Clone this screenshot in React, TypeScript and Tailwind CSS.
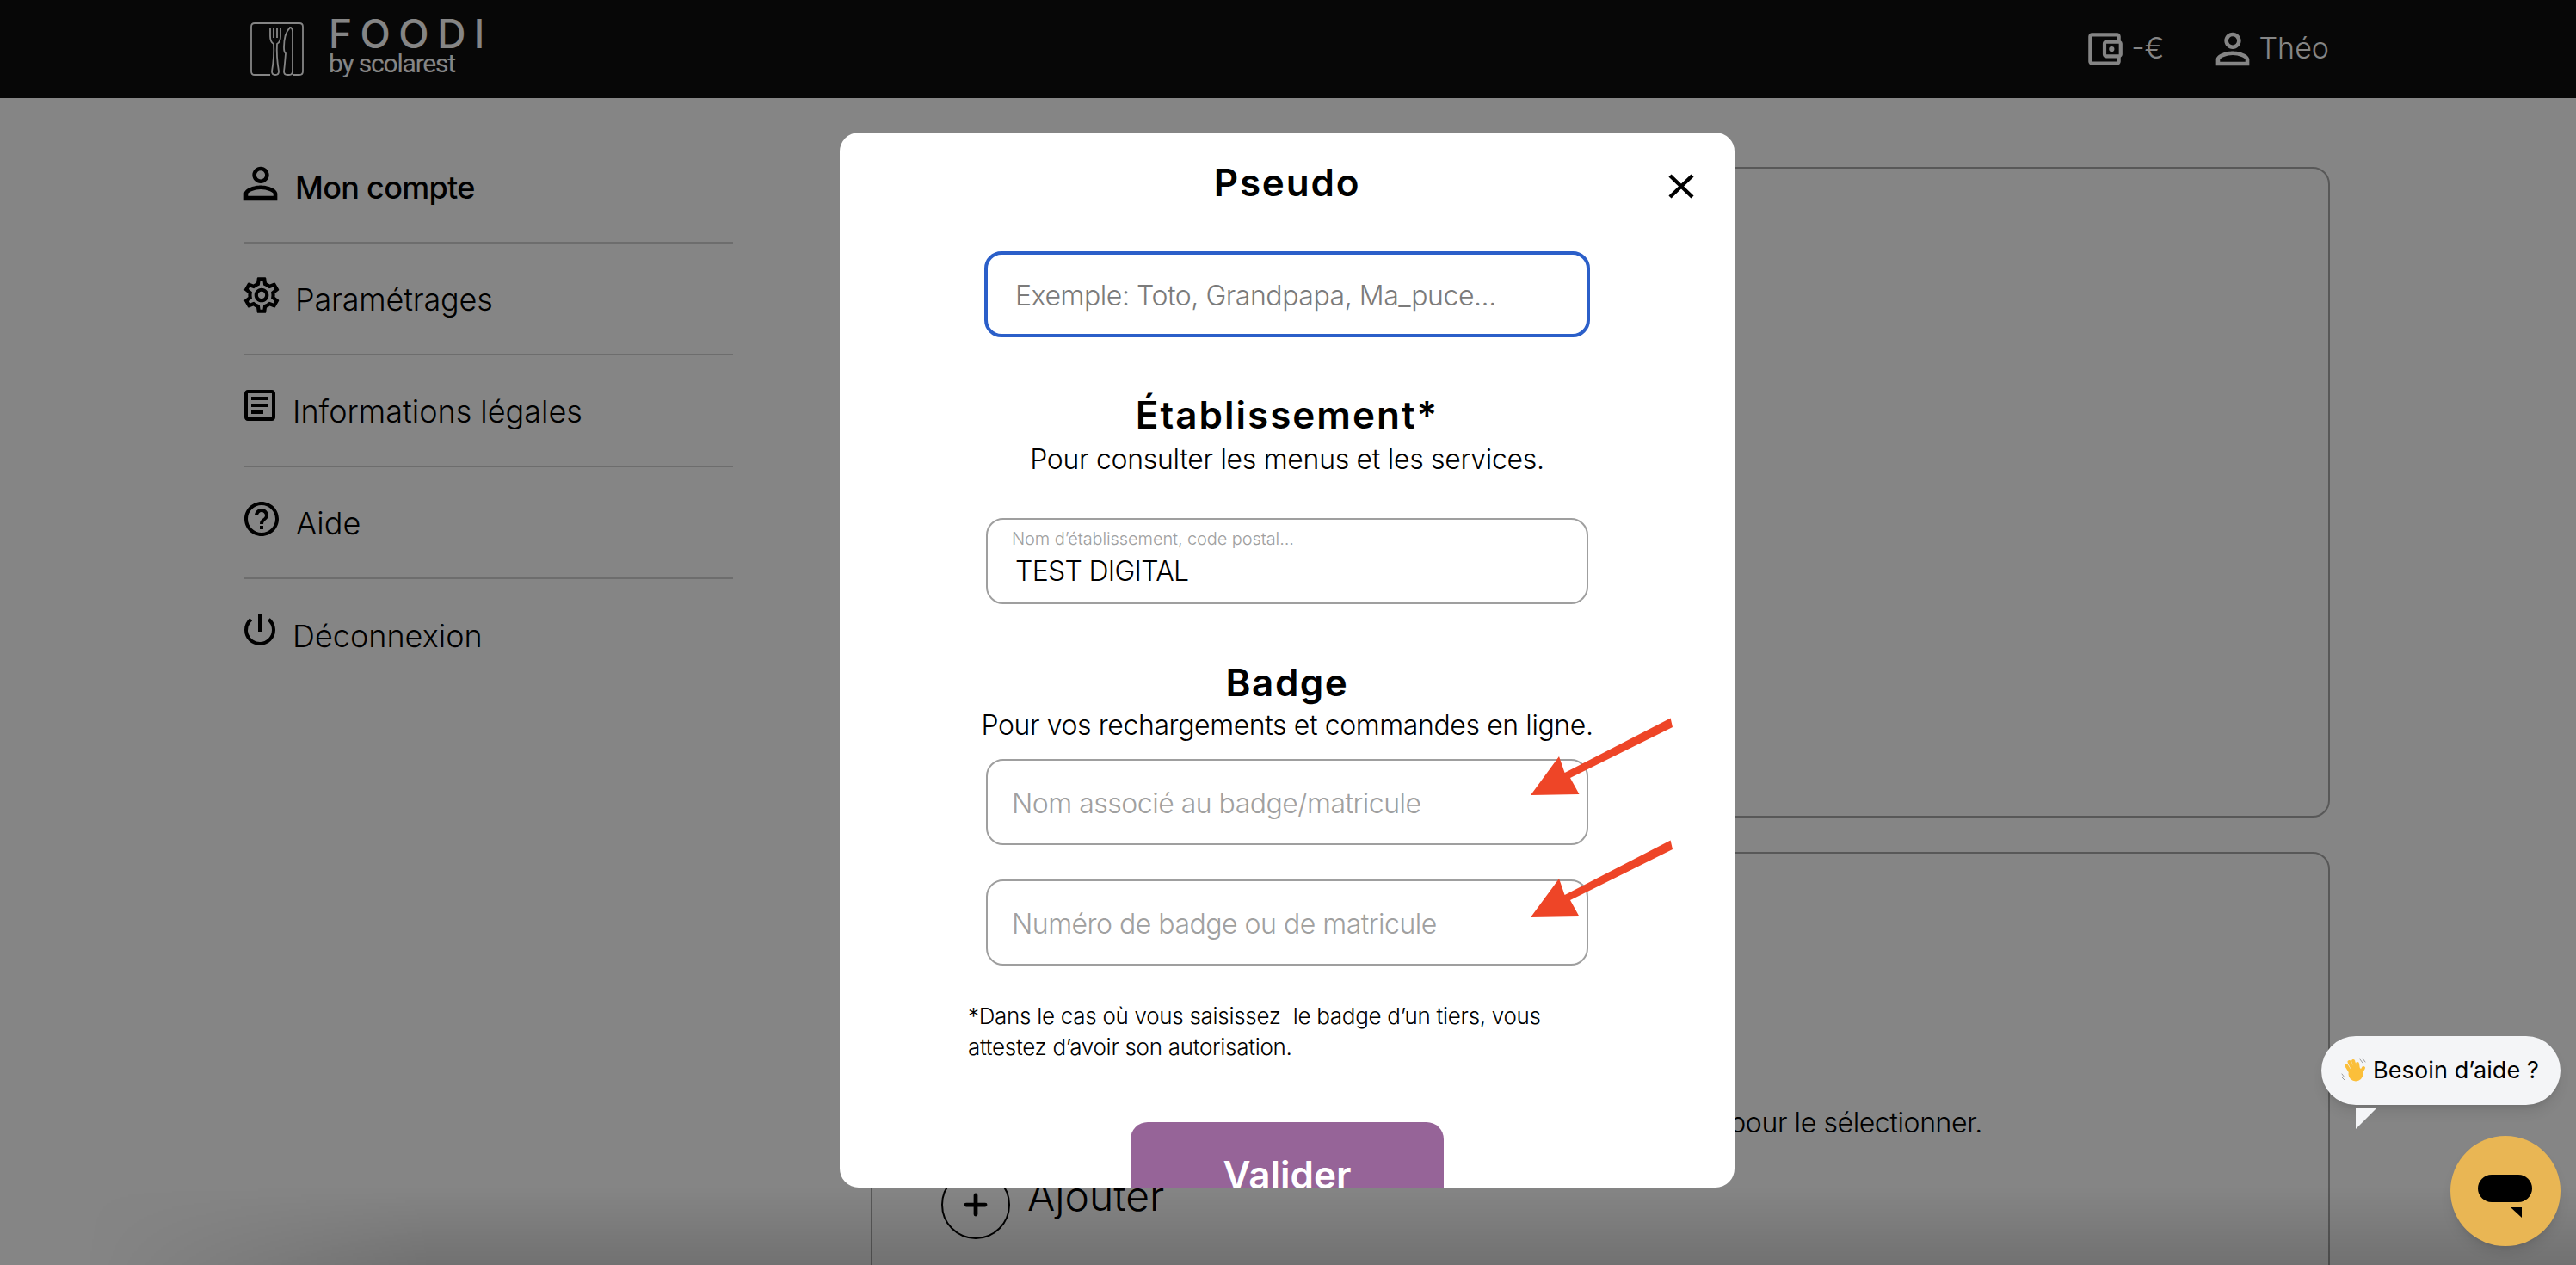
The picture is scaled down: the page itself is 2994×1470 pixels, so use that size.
import { Plus } from "lucide-react";
import {
  MdHelpOutline,
  MdOutlineAccountBalanceWallet,
  MdOutlineArticle,
  MdOutlinePowerSettingsNew,
  MdOutlineSettings,
  MdPersonOutline,
} from "react-icons/md";

const menu = [
  {
    label: "Mon compte",
    icon: <MdPersonOutline className="-ml-[10px] -mt-[8px] size-[58px] shrink-0" />,
    text: "ml-[11px] font-medium tracking-[-0.7px]",
  },
  {
    label: "Paramétrages",
    icon: <MdOutlineSettings className="-ml-[5px] -mt-[8px] size-[50px] shrink-0" />,
    text: "ml-[14px] tracking-[-0.2px]",
  },
  {
    label: "Informations légales",
    icon: <MdOutlineArticle className="-ml-[6px] -mt-[12px] size-[48px] shrink-0" />,
    text: "ml-[14px]",
  },
  {
    label: "Aide",
    icon: <MdHelpOutline className="-ml-[4px] -mt-[8px] size-[48px] shrink-0" />,
    text: "ml-[16px]",
  },
  {
    label: "Déconnexion",
    icon: <MdOutlinePowerSettingsNew className="-ml-[6px] -mt-[12px] size-[48px] shrink-0" />,
    text: "ml-[14px]",
  },
];

const Logo = () => (
  <svg width="64" height="64" viewBox="0 0 64 64" fill="none" stroke="white" strokeWidth="1.8" className="shrink-0">
    <path d="M24 62H6Q2 62 2 58V6Q2 2 6 2H58Q62 2 62 6V58Q62 62 58 62H50" />
    <path d="M24 7V17Q24 24 28 26Q29 40 26 58Q26 62 30 62Q34 62 34 58Q31 40 32 26Q36 24 36 17V7M28 7V19M32 7V19" />
    <path d="M47 7Q40 14 40 30Q40 36 42 37Q41 50 40 58Q40 62 44 62H46Q50 62 50 58V12Q50 7 47 7Z" />
  </svg>
);

const HandIcon = () => (
  <svg width="30" height="30" viewBox="0 0 30 30" fill="none" strokeLinecap="round" className="shrink-0">
    <g stroke="#9a9a9a" strokeWidth="1">
      <path d="M22 2L25 6M25 1L28 5" />
      <path d="M1 19L4 23M1 23L4 26" />
    </g>
    <g stroke="#fbbf3a" strokeWidth="4">
      <path d="M11 17L6 9" />
      <path d="M14 14L9.500 5" />
      <path d="M17 13L14 4" />
      <path d="M20 14L19 7" />
      <path d="M22 19L26 12" />
    </g>
    <circle cx="17" cy="19" r="8.500" fill="#fbbf3a" />
  </svg>
);

const Arrow = ({ className }: { className: string }) => (
  <svg width="175" height="100" viewBox="0 0 175 100" className={className}>
    <path fill="#ee4527" d="M37 49L4 94L60.500 93L50 74L169 15L166.600 4.500L43.600 68Z" />
  </svg>
);

const Field = ({ placeholder, className = "" }: { placeholder: string; className?: string }) => (
  <input
    placeholder={placeholder}
    className={`h-[100px] w-[700px] shrink-0 rounded-[20px] border-2 border-[#9f9f9f] bg-white px-[28px] pt-[2px] text-[32px] font-light tracking-[-0.5px] outline-none placeholder:text-[#a0a0a0] ${className}`}
  />
);

export default function App() {
  return (
    <div className="relative h-[1470px] w-[2994px] overflow-hidden bg-white font-['Inter',sans-serif] text-black">
      <header className="flex h-[114px] items-center bg-[#0f0f0f] pl-[290px] pr-[287px] text-white">
        <Logo />
        <div className="-mt-[6px] ml-[28px] flex flex-col">
          <span className="text-[46px] font-medium leading-[40px] tracking-[9.500px]">FOODI</span>
          <span className="font-['Roboto',sans-serif] text-[30px] font-normal leading-[30px] tracking-[-1.200px]">by scolarest</span>
        </div>
        <div className="ml-auto flex items-center text-[34px] font-light leading-none">
          <MdOutlineAccountBalanceWallet className="size-[50px]" />
          <span className="-mt-[2px] ml-[6px]">-€</span>
          <MdPersonOutline className="ml-[50px] size-[58px]" />
          <span className="-mt-[2px] ml-[2px]">Théo</span>
        </div>
      </header>

      <div className="flex pl-[284px]">
        <nav className="w-[568px] shrink-0 pt-[39px]">
          {menu.map((item, index) => (
            <div
              key={item.label}
              className={`flex h-[130px] items-center ${index < menu.length - 1 ? "border-b-2 border-[#d2d2d2]" : ""}`}
            >
              {item.icon}
              <span className={`mt-[2px] text-[36px] font-light ${item.text}`}>{item.label}</span>
            </div>
          ))}
        </nav>

        <main className="ml-[160px] w-[1696px] shrink-0 pt-[80px]">
          <section className="h-[756px] rounded-[20px] border-2 border-[#a9a9a9]" />
          <section className="mt-[40px] h-[600px] rounded-[20px] border-2 border-[#a9a9a9]">
            <p className="ml-[996px] mt-[291px] text-[32px] font-light leading-[44px] tracking-[-0.4px]">pour le sélectionner.</p>
            <div className="ml-[80px] mt-[33px] flex items-start">
              <span className="flex size-[80px] items-center justify-center rounded-full border-2 border-black">
                <Plus size={38} strokeWidth={3} />
              </span>
              <span className="ml-[20px] -mt-[2px] text-[48px] font-light leading-[64px]">Ajouter</span>
            </div>
          </section>
        </main>
      </div>

      <div className="absolute inset-x-0 bottom-0 h-[90px] bg-gradient-to-t from-black/15 to-transparent [mask-image:linear-gradient(to_right,transparent_100px,black_500px)]" />

      {/* modal + backdrop */}
      <div className="absolute inset-0 flex justify-center bg-black/48 pr-[2px] pt-[154px]">
        <div className="relative flex h-[1226px] w-[1040px] flex-col items-center overflow-hidden rounded-[22px] bg-white">
          <h2 className="mt-[28px] text-[44px] font-semibold leading-[60px] tracking-[1.800px]">Pseudo</h2>
          <button className="absolute right-[46px] top-[47px]">
            <svg width="32" height="31" viewBox="0 0 32 31" stroke="black" strokeWidth="4.500" fill="none">
              <path d="M3 3L29 28M29 3L3 28" />
            </svg>
          </button>
          <input
            placeholder="Exemple: Toto, Grandpapa, Ma_puce..."
            className="mt-[50px] h-[100px] w-[704px] shrink-0 rounded-[20px] border-4 border-[#2b5fc9] bg-white px-[32px] pt-[2px] text-[32px] font-light tracking-[-0.45px] outline-none placeholder:text-[#7b7b7b]"
          />

          <h2 className="mt-[62px] text-[44px] font-semibold leading-[56px] tracking-[2px]">Établissement*</h2>
          <p className="mt-[2px] text-[32px] font-light leading-[44px] tracking-[-0.3px]">Pour consulter les menus et les services.</p>
          <div className="mt-[46px] flex h-[100px] w-[700px] shrink-0 flex-col rounded-[20px] border-2 border-[#9f9f9f] pl-[28px] pt-[8px]">
            <span className="text-[20px] font-light leading-[28px] tracking-[-0.1px] text-[#a0a0a0]">Nom d’établissement, code postal...</span>
            <input
              defaultValue="TEST DIGITAL"
              className="ml-[4px] mt-[2px] bg-transparent text-[32px] font-light leading-[44px] tracking-[-0.7px] outline-none"
            />
          </div>

          <h2 className="mt-[63px] text-[44px] font-semibold leading-[56px] tracking-[1.500px]">Badge</h2>
          <p className="mt-[2px] text-[32px] font-light leading-[40px] tracking-[-0.4px]">Pour vos rechargements et commandes en ligne.</p>
          <Field className="mt-[19px]" placeholder="Nom associé au badge/matricule" />
          <Field className="mt-[40px]" placeholder="Numéro de badge ou de matricule" />

          <p className="ml-[149px] mt-[41px] w-[760px] self-start text-[26px] font-light leading-[36px] tracking-[-0.3px]">
            *Dans le cas où vous saisissez&nbsp; le badge d’un tiers, vous
            <br />
            attestez d’avoir son autorisation.
          </p>

          <button className="mt-[69px] h-[122px] w-[364px] shrink-0 rounded-[20px] bg-[#966498] text-[44px] font-semibold text-white">
            Valider
          </button>

          <Arrow className="absolute left-[799px] top-[676px]" />
          <Arrow className="absolute left-[799px] top-[818px]" />
        </div>
      </div>

      {/* help widget */}
      <div className="absolute left-[2698px] top-[1204px] flex h-[80px] w-[278px] items-center rounded-[40px] bg-[#f4f5f7] pl-[23px] text-[27px] shadow-lg">
        <HandIcon />
        <span className="ml-[7px] whitespace-nowrap tracking-[0.1px]">Besoin d’aide ?</span>
      </div>
      <div className="absolute left-[2738px] top-[1288px] h-0 w-0 border-r-[24px] border-t-[24px] border-r-transparent border-t-[#f4f5f7]" />
      <div className="absolute left-[2848px] top-[1320px] size-[128px] rounded-full bg-[#e9b654] shadow-lg">
        <svg width="128" height="128" viewBox="0 0 128 128">
          <rect x="32" y="45" width="63" height="32" rx="16" />
          <path d="M70 83H83V95Z" />
        </svg>
      </div>
    </div>
  );
}
